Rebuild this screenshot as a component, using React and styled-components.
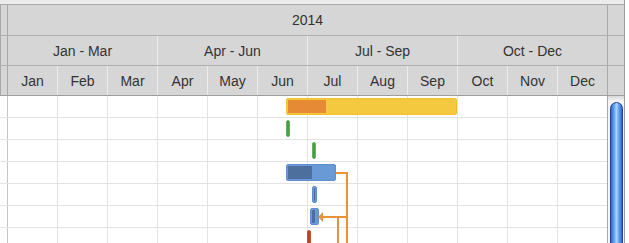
import React from "react";
import styled, { createGlobalStyle } from "styled-components";

const GlobalStyle = createGlobalStyle`
  html, body {
    margin: 0;
    padding: 0;
    overflow: hidden;
    background: #ffffff;
  }
  body {
    font-family: "Liberation Sans", Arial, sans-serif;
  }
`;

const MONTHS = ["Jan", "Feb", "Mar", "Apr", "May", "Jun", "Jul", "Aug", "Sep", "Oct", "Nov", "Dec"];
const QUARTERS = ["Jan - Mar", "Apr - Jun", "Jul - Sep", "Oct - Dec"];
const COLS = "7px repeat(12, 50px) 17px";

// left / width in px from the left edge of the chart
const TASKS = [
  { kind: "summary", left: 286, width: 171, done: 38 },
  { kind: "green", left: 286, width: 4 },
  { kind: "green", left: 312, width: 4 },
  { kind: "blue", left: 286, width: 50, done: 24 },
  { kind: "blueThin", left: 312, width: 5 },
  { kind: "blue", left: 310, width: 9, done: 3, arrow: true },
  { kind: "red", left: 307, width: 4 },
];

const BAR_COLORS = {
  summary: { fill: "#f4c83f", edge: "#f0c030", done: "#e68a36" },
  green: { fill: "#4a9c47", edge: "#5fb35a", done: "#4a9c47" },
  blue: { fill: "#6a9ad6", edge: "#5f8fd0", done: "#4c6f9e" },
  blueThin: { fill: "#6a9ad6", edge: "#5f8fd0", done: "#4c6f9e" },
  red: { fill: "#b5432a", edge: "#c7553a", done: "#b5432a" },
};

const Frame = styled.div`
  width: 625px;
  height: 243px;
  overflow: hidden;
  box-sizing: border-box;
  border-right: 1px solid #9c9c9c;
  background: #ffffff;
`;

const TopStrip = styled.div`
  height: 4px;
  background: #ebebeb;
  border-bottom: 1px solid #a9a9a9;
`;

const HeaderRow = styled.div`
  display: grid;
  grid-template-columns: ${COLS};
  height: ${(p) => p.$height}px;
  background: #d6d6d6;
  border-bottom: 1px solid ${(p) => (p.$last ? "#9e9e9e" : "#b0b0b0")};
`;

const HeaderCell = styled.div`
  grid-column: span ${(p) => p.$span || 1};
  box-sizing: border-box;
  border-left: 1px solid ${(p) => (p.$strong ? "#a9a9a9" : "#ececec")};
  display: flex;
  align-items: center;
  justify-content: center;
  font-size: 14px;
  color: #333333;
  white-space: nowrap;
`;

const Body = styled.div`
  display: flex;
`;

const Rows = styled.div`
  position: relative;
  width: 607px;
`;

const Row = styled.div`
  position: relative;
  display: grid;
  grid-template-columns: 7px repeat(12, 50px);
  height: 21px;
  border-bottom: 1px solid #e3e3e3;
`;

const Cell = styled.div`
  box-sizing: border-box;
  border-left: ${(p) => (p.$first ? "1px solid #c4c4c4" : p.$lead ? "none" : "1px solid #e3e3e3")};
`;

const Bar = styled.div`
  position: absolute;
  top: 2px;
  height: 17px;
  box-sizing: border-box;
  border-radius: 2px;
  background: ${(p) => BAR_COLORS[p.$kind].fill};
  border: 1px solid ${(p) => BAR_COLORS[p.$kind].edge};
  overflow: hidden;
`;

const Progress = styled.div`
  position: absolute;
  left: 1px;
  top: 1px;
  bottom: 1px;
  background: ${(p) => BAR_COLORS[p.$kind].done};
`;

const ThinCore = styled.div`
  position: absolute;
  left: 1px;
  top: 1px;
  bottom: 1px;
  width: 1px;
  background: #4c6f9e;
`;

const Links = styled.svg`
  position: absolute;
  left: 0;
  top: 0;
  pointer-events: none;
`;

const ScrollTrack = styled.div`
  width: 16px;
  height: 147px;
  border-left: 1px solid #a9a9a9;
  background: linear-gradient(to bottom, #d8d8d8 0px, #f4f4f4 5px, #f7f7f7 100%);
  padding: 6px 1px 0 2px;
  box-sizing: border-box;
  width: 17px;
`;

const ScrollThumb = styled.div`
  height: 200px;
  box-sizing: border-box;
  border: 1px solid #1f3f9a;
  border-radius: 7px 7px 0 0;
  background: linear-gradient(
    to right,
    #2f64cf 0%,
    #5d9cf0 25%,
    #a9d2fb 50%,
    #5d9cf0 75%,
    #2f64cf 100%
  );
`;

const TaskRow = ({ task }) => (
  <Row>
    <Cell $lead />
    {MONTHS.map((m, i) => (
      <Cell key={m} $first={i === 0} />
    ))}
    <Bar $kind={task.kind} style={{ left: task.left, width: task.width }}>
      {task.done ? <Progress $kind={task.kind} style={{ width: task.done }} /> : null}
      {task.kind === "blueThin" ? <ThinCore style={{ left: 1 }} /> : null}
    </Bar>
  </Row>
);

const App = () => {
  return (
    <>
      <GlobalStyle />
      <Frame>
        <TopStrip />
        <HeaderRow $height={30}>
          <HeaderCell $strong />
          <HeaderCell $span={12} $strong>
            2014
          </HeaderCell>
          <HeaderCell $strong />
        </HeaderRow>
        <HeaderRow $height={29}>
          <HeaderCell $strong />
          {QUARTERS.map((q, i) => (
            <HeaderCell key={q} $span={3} $strong={i === 0}>
              {q}
            </HeaderCell>
          ))}
          <HeaderCell $strong />
        </HeaderRow>
        <HeaderRow $height={29} $last>
          <HeaderCell $strong />
          {MONTHS.map((m, i) => (
            <HeaderCell key={m} $strong={i === 0}>
              {m}
            </HeaderCell>
          ))}
          <HeaderCell $strong />
        </HeaderRow>
        <Body>
          <Rows>
            {TASKS.map((t, i) => (
              <TaskRow key={i} task={t} />
            ))}
            <Links width="607" height="160" viewBox="0 0 607 160">
              <g stroke="#e8923a" strokeWidth="2" fill="none">
                <polyline points="336,77 347,77 347,160" />
                <polyline points="323,121 347,121" />
                <polyline points="338,121 338,160" />
              </g>
              <polygon points="318,121 323,116 323,126" fill="#e8923a" />
            </Links>
          </Rows>
          <ScrollTrack>
            <ScrollThumb />
          </ScrollTrack>
        </Body>
      </Frame>
    </>
  );
};

export default App;
